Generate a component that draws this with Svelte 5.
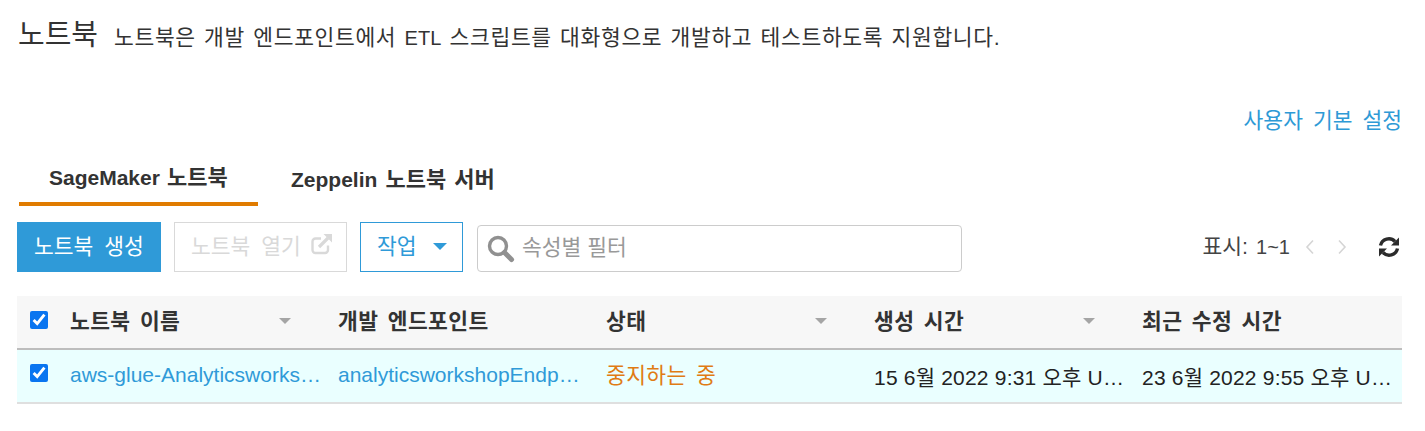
<script>
  const columns = [
    { label: '노트북 이름', sort: true },
    { label: '개발 엔드포인트', sort: false },
    { label: '상태', sort: true },
    { label: '생성 시간', sort: true },
    { label: '최근 수정 시간', sort: false }
  ]
</script>

<div class="page">
  <header class="title">
    <h1>노트북</h1>
    <p>노트북은 개발 엔드포인트에서 <span class="lat">ETL</span> 스크립트를 대화형으로 개발하고 테스트하도록 지원합니다.</p>
  </header>

  <div class="prefs"><a href="#prefs">사용자 기본 설정</a></div>

  <nav class="tabs">
    <div class="tab active"><span class="lat">SageMaker</span> 노트북</div>
    <div class="tab second"><span class="lat">Zeppelin</span> 노트북 서버</div>
  </nav>

  <div class="toolbar">
    <button class="btn primary"><span>노트북 생성</span></button>
    <button class="btn disabled">
      <span>노트북 열기</span>
      <svg width="22" height="22" viewBox="0 0 22 22" fill="none" stroke="#d9d9d9" stroke-width="2.400">
        <path d="M17 12.500v4.500a3 3 0 0 1-3 3H4.500a3 3 0 0 1-3-3V8.500a3 3 0 0 1 3-3H10" />
        <path d="M8 14 17 5" stroke-width="3.200" />
        <path d="M12.500 1h8.500v8.500z" fill="#d9d9d9" stroke="none" />
      </svg>
    </button>
    <button class="btn action"><span>작업</span> <span class="caret"></span></button>
    <div class="search">
      <svg width="28" height="28" viewBox="0 0 28 28" fill="none">
        <circle cx="11" cy="11" r="8.500" stroke="#909090" stroke-width="3.400" />
        <path d="M17.500 17.500l7 7" stroke="#909090" stroke-width="5" stroke-linecap="round" />
      </svg>
      <span class="hint">속성별 필터</span>
    </div>
    <div class="pager">
      <span class="count">표시: <span class="lat">1~1</span></span>
      <svg class="chev" width="12" height="16" viewBox="0 0 12 16" fill="none" stroke="#d5d5d5" stroke-width="1.600"><path d="M9 1.500 3 8l6 6.500" /></svg>
      <svg class="chev next" width="12" height="16" viewBox="0 0 12 16" fill="none" stroke="#d5d5d5" stroke-width="1.600"><path d="M3 1.500 9 8l-6 6.500" /></svg>
      <svg class="refresh" width="22" height="22" viewBox="0 0 22 22" fill="none" stroke="#2b2b2b" stroke-width="3.400">
        <path d="M2.500 9.500A8.500 8.500 0 0 1 17 5.500" />
        <path d="M19.500 12.500A8.500 8.500 0 0 1 5 16.500" />
        <path d="M21 1.500v8h-8z" fill="#2b2b2b" stroke="none" />
        <path d="M1 20.500v-8h8z" fill="#2b2b2b" stroke="none" />
      </svg>
    </div>
  </div>

  <div class="table">
    <div class="row head">
      <div class="check"><input type="checkbox" checked /></div>
      {#each columns as col}
        <div class="cell">
          <span>{col.label}</span>
          {#if col.sort}<span class="sort"></span>{/if}
        </div>
      {/each}
    </div>
    <div class="row body">
      <div class="check up"><input type="checkbox" checked /></div>
      <div class="cell link"><span class="clip">aws-glue-AnalyticsworkshopNotebook</span></div>
      <div class="cell link"><span class="clip">analyticsworkshopEndpoint-dev</span></div>
      <div class="cell status"><span class="clip">중지하는 중</span></div>
      <div class="cell when"><span class="clip">15 6월 2022 9:31 오후 UTC+9</span></div>
      <div class="cell when"><span class="clip">23 6월 2022 9:55 오후 UTC+9</span></div>
    </div>
  </div>
</div>

<style>
  :global(body) {
    background: #fff;
  }

  .page {
    height: 431px;
    box-sizing: border-box;
    padding: 0 23px 0 17px;
    font-family: "Liberation Sans", "Noto Sans CJK KR", sans-serif;
    font-size: 21.500px;
    word-spacing: 3px;
    color: #333;
    overflow: hidden;
  }
  .lat {
    font-size: 20px;
    word-spacing: 0;
  }

  .title {
    display: flex;
    align-items: baseline;
    gap: 16px;
    height: 72px;
    padding-top: 15px;
    box-sizing: border-box;
  }
  h1 {
    margin: 0;
    font-size: 29px;
    font-weight: 400;
    line-height: 40px;
    padding-left: 1px;
  }
  .title p {
    margin: 0;
    white-space: nowrap;
    word-spacing: 1.700px;
    letter-spacing: 0.650px;
  }
  .title p .lat {
    letter-spacing: 0;
  }

  .prefs {
    text-align: right;
    padding-top: 34px;
    height: 92px;
    box-sizing: border-box;
    line-height: 30px;
    word-spacing: 4px;
  }
  .prefs a {
    color: #2e9ad6;
    text-decoration: none;
  }

  .tabs {
    display: flex;
    height: 58px;
    padding-left: 2px;
  }
  .tab {
    font-weight: 700;
    font-size: 22px;
    line-height: 24px;
    padding: 4px 30px 0;
    height: 42px;
    box-sizing: border-box;
    color: #333;
    word-spacing: 2px;
    white-space: nowrap;
  }
  .tab .lat {
    font-size: 21px;
  }
  .tab.active {
    border-bottom: 4px solid #e07b00;
    padding-top: 2px;
    width: 239px;
    word-spacing: 1px;
  }
  .tab.second {
    padding-left: 33px;
  }

  .toolbar {
    display: flex;
    align-items: center;
    height: 50px;
  }
  .btn {
    height: 50px;
    box-sizing: border-box;
    font: inherit;
    word-spacing: 5px;
    background: #fff;
    border: 1px solid;
    padding: 0 16px 6px;
    margin-right: 13px;
    display: flex;
    align-items: center;
    white-space: nowrap;
  }
  .primary {
    background: #2f9ad8;
    border-color: #2f9ad8;
    color: #fff;
    width: 144px;
  }
  .disabled {
    border-color: #d9d9d9;
    color: #d9d9d9;
    width: 173px;
    gap: 10px;
    padding-right: 0;
  }
  .disabled svg {
    flex-shrink: 0;
  }
  .action {
    border-color: #2f9ad8;
    color: #2f9ad8;
    width: 103px;
    margin-right: 14px;
  }
  .caret {
    display: inline-block;
    margin-left: 16px;
    margin-top: 5px;
    border: 7px solid transparent;
    border-top: 7px solid #2f9ad8;
    border-bottom: 0;
  }
  .search {
    width: 485px;
    height: 47px;
    margin-top: 3px;
    box-sizing: border-box;
    border: 1px solid #ccc;
    border-radius: 4px;
    display: flex;
    align-items: center;
    gap: 7px;
    padding-left: 9px;
    color: #999;
  }
  .hint {
    padding-bottom: 6px;
    word-spacing: 0;
  }
  .pager {
    margin-left: auto;
    display: flex;
    align-items: center;
    color: #444;
  }
  .count {
    padding-bottom: 6px;
    word-spacing: 2px;
  }
  .chev {
    margin-left: 14px;
  }
  .chev.next {
    margin-left: 20px;
  }
  .refresh {
    margin-left: 30px;
    margin-right: 2px;
  }

  .table {
    margin-top: 24px;
  }
  .row {
    display: grid;
    grid-template-columns: 43px repeat(5, 268px);
    align-items: center;
    box-sizing: border-box;
  }
  .head {
    height: 54px;
    padding-bottom: 5px;
    background: #f7f7f7;
    border-bottom: 2px solid #bdbdbd;
    font-weight: 700;
    color: #333;
    letter-spacing: 0.400px;
  }
  .body {
    height: 54px;
    background: #eaffff;
    border-bottom: 2px solid #dfdfdf;
    color: #222;
  }
  .check {
    display: flex;
    padding-left: 13px;
  }
  .check.up {
    margin-top: -7px;
  }
  .check input {
    width: 18px;
    height: 18px;
    margin: 0;
    accent-color: #0a75f0;
  }
  .cell {
    display: flex;
    align-items: center;
    justify-content: space-between;
    padding: 0 10px;
    min-width: 0;
  }
  .clip {
    overflow: hidden;
    text-overflow: ellipsis;
    white-space: nowrap;
  }
  .when {
    font-size: 21px;
    word-spacing: 0;
    letter-spacing: 0.200px;
    padding: 0 2px 1px 10px;
  }
  .link {
    color: #2f9ad8;
    font-size: 21px;
    padding: 0 6px 2px 10px;
  }
  .status {
    color: #e07b14;
    padding-bottom: 5px;
    letter-spacing: 0.400px;
  }
  .sort {
    border: 6px solid transparent;
    border-top: 6px solid #a5a5a5;
    border-bottom: 0;
    margin-right: 27px;
    margin-top: 3px;
  }
</style>
